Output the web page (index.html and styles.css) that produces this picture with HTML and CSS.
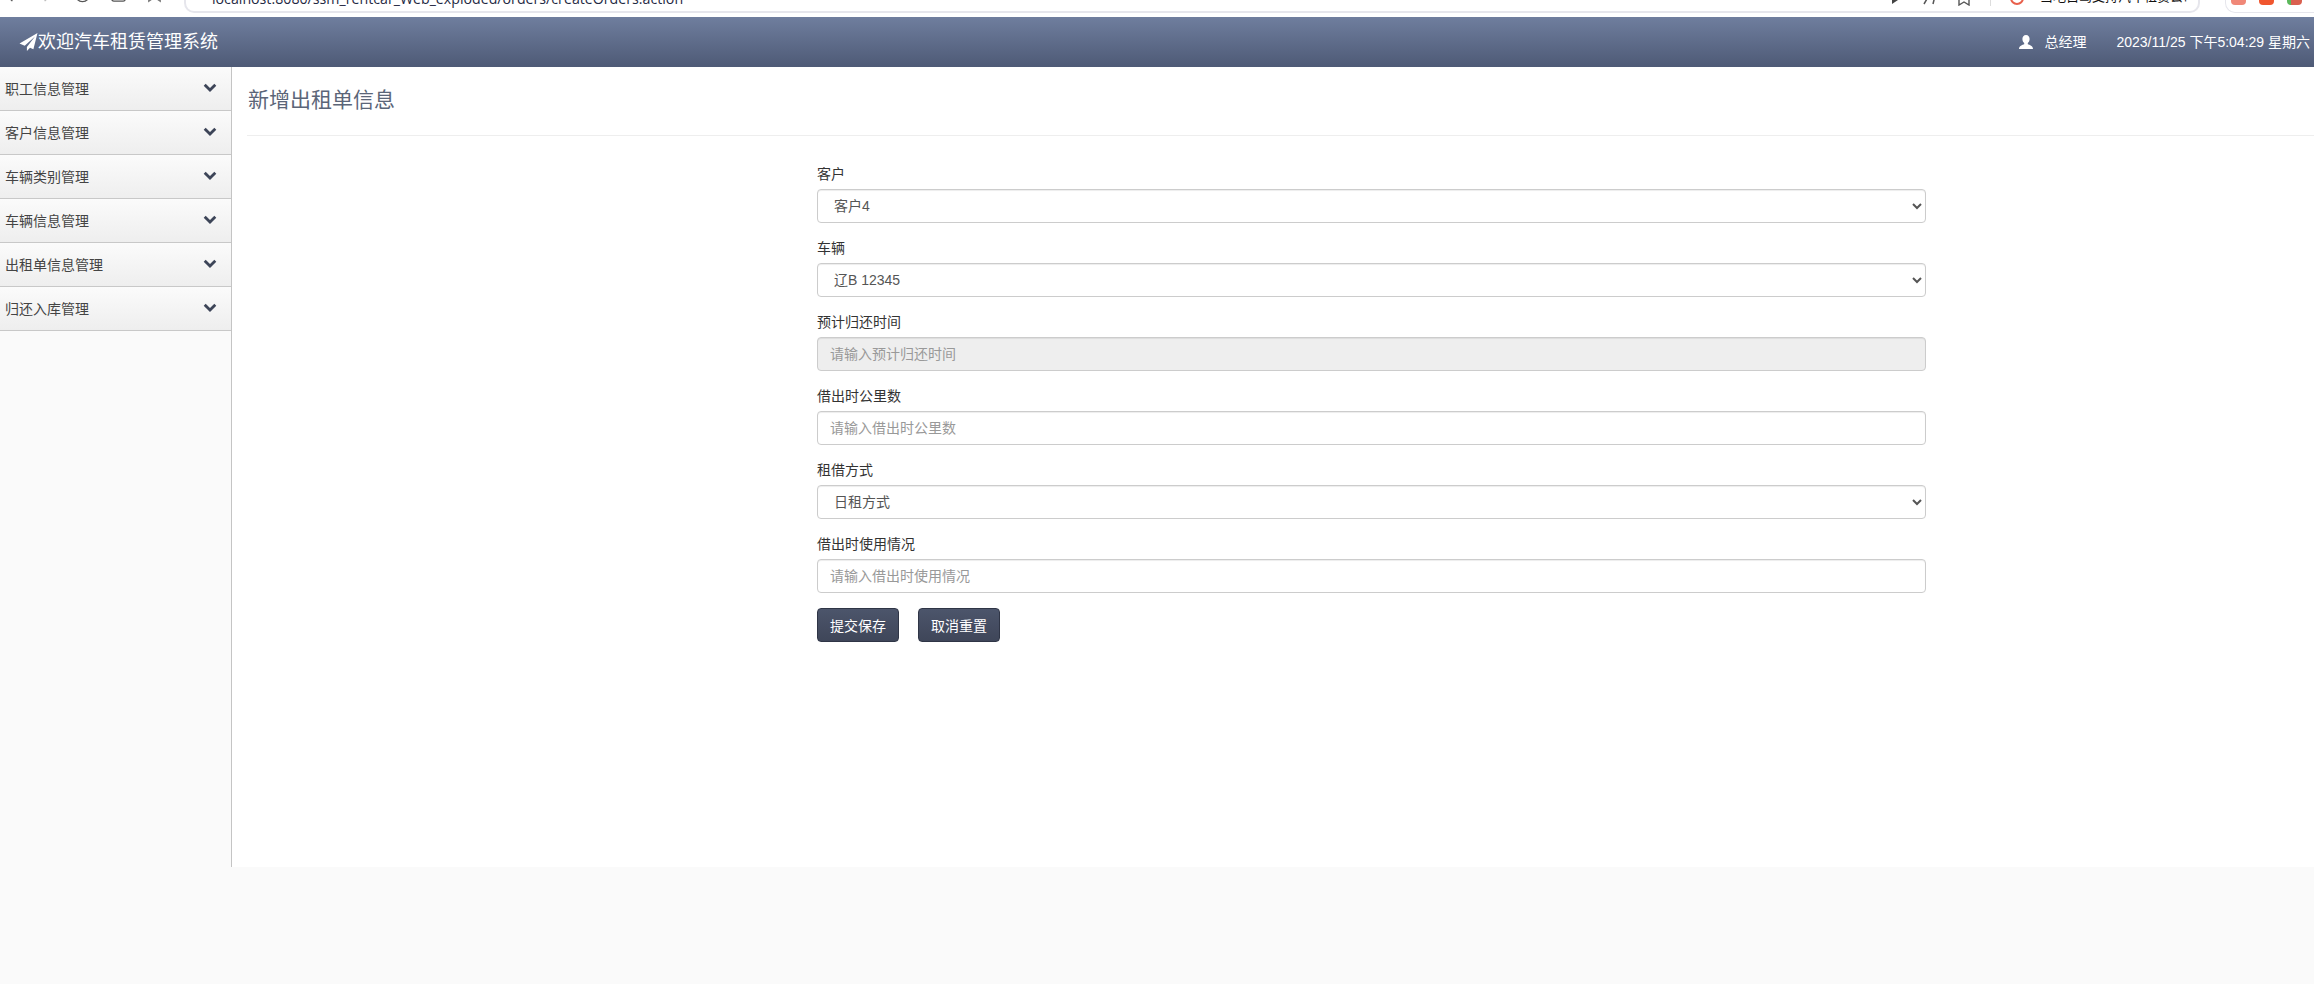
FILE: index.html
```html
<!DOCTYPE html>
<html lang="zh-CN">
<head>
<meta charset="utf-8">
<title>欢迎汽车租赁管理系统</title>
<link rel="stylesheet" href="styles.css">
</head>
<body>
<div class="browser-bar">
  <div class="nav-icons">
    <svg class="nav-icon" viewBox="0 0 20 20"><path d="M12 3 5 10l7 7" fill="none" stroke="#555" stroke-width="1.4"/></svg>
    <svg class="nav-icon" viewBox="0 0 20 20"><path d="M8 3l7 7-7 7" fill="none" stroke="#bbb" stroke-width="1.4"/></svg>
    <svg class="nav-icon" viewBox="0 0 20 20"><circle cx="10" cy="10" r="7.5" fill="none" stroke="#555" stroke-width="1.4"/></svg>
    <svg class="nav-icon" viewBox="0 0 20 20"><rect x="3" y="3" width="14" height="14" rx="2" fill="none" stroke="#555" stroke-width="1.4"/></svg>
    <svg class="nav-icon" viewBox="0 0 20 20"><path d="M4 17V4h12v13l-6-4z" fill="none" stroke="#777" stroke-width="1.4"/></svg>
  </div>
  <div class="url-box">
    <span class="url-text">localhost:8080/ssm_rentcar_Web_exploded/orders/createOrders.action</span>
    <div class="url-tools">
      <svg class="tool-icon" viewBox="0 0 16 16"><path d="M4 2l9 6-9 6z" fill="#444"/></svg>
      <svg class="tool-icon" viewBox="0 0 16 16"><path d="M2 14 9 2h5l-3 12" fill="none" stroke="#555" stroke-width="1.5"/></svg>
      <svg class="tool-icon" viewBox="0 0 16 16"><path d="M3 15V2h10v13l-5-3z" fill="none" stroke="#555" stroke-width="1.4"/></svg>
      <span class="tool-sep"></span>
      <svg class="tool-icon" viewBox="0 0 16 16"><circle cx="8" cy="8" r="6" fill="none" stroke="#e8604c" stroke-width="2"/></svg>
      <span class="search-hint">当地自驾支持汽车租赁公司排行榜</span>
    </div>
  </div>
  <div class="ext-box">
    <span class="ext ext-red"></span>
    <span class="ext ext-orange"></span>
    <span class="ext ext-green"></span>
  </div>
</div>

<header class="topbar">
  <div class="brand">
    <svg class="send-icon" viewBox="0 0 18 18"><path d="M18 0 0 10.500l5.200 2.300L15.500 3.500 7.400 14v4l3.100-3.200 3.400 1.500z" fill="#fff"/></svg>
    <span>欢迎汽车租赁管理系统</span>
  </div>
  <div class="top-right">
    <svg class="user-icon" viewBox="0 0 16 16"><path d="M8 1c2.300 0 3.600 1.700 3.600 4 0 1.700-.8 3.300-1.800 4.100v1.100c1.800.7 5.200 1.400 5.200 4.800H1c0-3.400 3.400-4.100 5.200-4.800V9.100C5.200 8.300 4.400 6.700 4.400 5 4.400 2.700 5.700 1 8 1z" fill="#fff"/></svg>
    <span class="user-name">总经理</span>
    <span class="clock">2023/11/25 下午5:04:29 星期六</span>
  </div>
</header>

<div class="layout">
  <nav class="sidebar">
    <div class="side-item"><span>职工信息管理</span><svg class="chev" viewBox="0 0 14 10"><path d="M1.700 1.700 7 7l5.300-5.300" fill="none" stroke="#3d4558" stroke-width="2.800"/></svg></div>
    <div class="side-item"><span>客户信息管理</span><svg class="chev" viewBox="0 0 14 10"><path d="M1.700 1.700 7 7l5.300-5.300" fill="none" stroke="#3d4558" stroke-width="2.800"/></svg></div>
    <div class="side-item"><span>车辆类别管理</span><svg class="chev" viewBox="0 0 14 10"><path d="M1.700 1.700 7 7l5.300-5.300" fill="none" stroke="#3d4558" stroke-width="2.800"/></svg></div>
    <div class="side-item"><span>车辆信息管理</span><svg class="chev" viewBox="0 0 14 10"><path d="M1.700 1.700 7 7l5.300-5.300" fill="none" stroke="#3d4558" stroke-width="2.800"/></svg></div>
    <div class="side-item"><span>出租单信息管理</span><svg class="chev" viewBox="0 0 14 10"><path d="M1.700 1.700 7 7l5.300-5.300" fill="none" stroke="#3d4558" stroke-width="2.800"/></svg></div>
    <div class="side-item"><span>归还入库管理</span><svg class="chev" viewBox="0 0 14 10"><path d="M1.700 1.700 7 7l5.300-5.300" fill="none" stroke="#3d4558" stroke-width="2.800"/></svg></div>
  </nav>

  <main class="content">
    <div class="page-header"><h3 class="page-title">新增出租单信息</h3></div>
    <form class="order-form">
      <div class="form-group">
        <label class="form-label">客户</label>
        <select class="form-control"><option>客户4</option></select>
      </div>
      <div class="form-group">
        <label class="form-label">车辆</label>
        <select class="form-control"><option>辽B 12345</option></select>
      </div>
      <div class="form-group">
        <label class="form-label">预计归还时间</label>
        <input class="form-control" type="text" placeholder="请输入预计归还时间" disabled>
      </div>
      <div class="form-group">
        <label class="form-label">借出时公里数</label>
        <input class="form-control" type="text" placeholder="请输入借出时公里数">
      </div>
      <div class="form-group">
        <label class="form-label">租借方式</label>
        <select class="form-control"><option>日租方式</option></select>
      </div>
      <div class="form-group">
        <label class="form-label">借出时使用情况</label>
        <input class="form-control" type="text" placeholder="请输入借出时使用情况">
      </div>
      <div class="form-actions">
        <button class="btn" type="button">提交保存</button>
        <button class="btn" type="button">取消重置</button>
      </div>
    </form>
  </main>
</div>
</body>
</html>
```
FILE: styles.css
```css
* { box-sizing: border-box; }

html, body { margin: 0; padding: 0; }

body {
  height: 984px;
  overflow: hidden;
  background: #fafafa;
  color: #333;
  font-family: "Liberation Sans", "Noto Sans CJK SC", sans-serif;
  font-size: 14px;
  line-height: 20px;
}

/* clipped browser chrome */
.browser-bar {
  height: 17px;
  background: #fff;
  display: flex;
  align-items: flex-end;
  overflow: hidden;
}

.nav-icons {
  width: 184px;
  flex: none;
  display: flex;
  gap: 17px;
  padding: 0 0 13px 1px;
  align-items: flex-end;
}

.nav-icon { width: 19px; height: 19px; flex: none; }

.url-box {
  width: 2016px;
  flex: none;
  height: 30px;
  margin-bottom: 4px;
  border: 2px solid #e6e6ec;
  border-top: 0;
  border-radius: 0 0 10px 10px;
  padding: 0 8px 0 26px;
  display: flex;
  align-items: flex-end;
  justify-content: space-between;
}

.url-text {
  font-family: "Open Sans", "Liberation Sans", sans-serif;
  font-size: 14.200px;
  line-height: 18px;
  margin-bottom: 3px;
  color: #1f2a44;
  white-space: nowrap;
}

.url-tools {
  display: flex;
  align-items: flex-end;
  gap: 18px;
  margin-bottom: 5px;
}

.tool-icon { width: 16px; height: 16px; flex: none; }

.tool-sep { width: 1px; height: 16px; background: #ddd; }

.search-hint {
  width: 150px;
  overflow: hidden;
  white-space: nowrap;
  line-height: 18px;
  color: #111;
  font-size: 13px;
  margin-left: -3px;
}

.ext-box {
  margin-left: 25px;
  flex: 1;
  height: 30px;
  margin-bottom: 4px;
  border: 1px solid #e6e6ec;
  border-top: 0;
  border-right: 0;
  border-radius: 0 0 0 10px;
  display: flex;
  align-items: flex-end;
  gap: 13px;
  padding: 0 0 7px 5px;
}

.ext { width: 15px; height: 16px; border-radius: 4px; flex: none; }
.ext-red { background: #f08878; }
.ext-orange { background: #f0562e; }
.ext-green { background: #d9604f; border-left: 4px solid #5cb85c; }

/* header */
.topbar {
  height: 50px;
  background: linear-gradient(to bottom, #6f7e9e, #4e5a76);
  color: #fff;
  display: flex;
  align-items: center;
  justify-content: space-between;
  padding: 0 4px 0 19px;
}

.brand {
  display: flex;
  align-items: center;
  font-size: 18px;
}

.send-icon { width: 19px; height: 18px; flex: none; }

.top-right { display: flex; align-items: center; }

.user-icon { width: 16px; height: 16px; flex: none; }

.user-name { margin-left: 10px; }

.clock { margin-left: 30px; white-space: nowrap; }

/* body layout */
.layout {
  height: 800px;
  display: flex;
}

.sidebar {
  width: 232px;
  flex: none;
  border-right: 1px solid #c4c4c4;
  background: #fafafa;
}

.side-item {
  height: 44px;
  padding: 0 14px 0 5px;
  display: flex;
  align-items: center;
  justify-content: space-between;
  background: linear-gradient(to bottom, #fbfbfb, #eeeeee);
  border-bottom: 1px solid #c8c8c8;
  color: #444;
}

.chev { width: 14px; height: 10px; flex: none; margin-top: -1px; }

.content {
  flex: 1;
  background: #fff;
  padding-left: 15px;
}

.page-header {
  height: 69px;
  padding-top: 20px;
  border-bottom: 1px solid #eee;
}

.page-title {
  margin: 0 0 0 1px;
  font-size: 21px;
  font-weight: 400;
  line-height: 26px;
  color: #5b6578;
}

.order-form {
  width: 1109px;
  margin: 28px 0 0 570px;
}

.form-group { margin-bottom: 15px; }

.form-label {
  display: block;
  margin-bottom: 5px;
  font-weight: 400;
  color: #333;
}

.form-control {
  display: block;
  width: 100%;
  height: 34px;
  padding: 6px 12px;
  font-family: inherit;
  font-size: 14px;
  line-height: 20px;
  color: #555;
  background: #fff;
  border: 1px solid #ccc;
  border-radius: 4px;
  box-shadow: inset 0 1px 1px rgba(0, 0, 0, .075);
}

.form-control::placeholder { color: #999; opacity: 1; }

.form-control:disabled { background: #eee; }

.form-actions {
  display: flex;
  gap: 19px;
}

.btn {
  width: 82px;
  height: 34px;
  padding: 0;
  font-family: inherit;
  font-size: 14px;
  color: #fff;
  background: linear-gradient(to bottom, #4c556b, #3f4659);
  border: 1px solid #2f3546;
  border-radius: 4px;
}
```
